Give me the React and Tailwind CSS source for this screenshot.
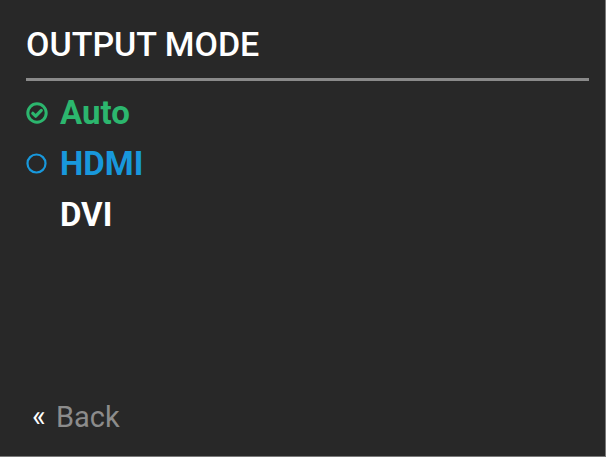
export default function App() {
  const items = [
    { label: "Auto", color: "text-[#2cb66e]", icon: "check" },
    { label: "HDMI", color: "text-[#1898dc]", icon: "ring" },
    { label: "DVI", color: "text-white", icon: null },
  ];

  return (
    <div
      className="w-[606px] h-[457px] bg-[#282828] border-r border-b border-[#7a7a7a] flex flex-col pl-[25px] pr-[16px]"
      style={{ fontFamily: "Roboto, 'Liberation Sans', sans-serif" }}
    >
      <div className="pl-[1px] pt-[24px] text-[34px] leading-[40px] font-medium text-white">OUTPUT MODE</div>
      <div className="ml-[1px] mt-[14px] h-[3px] bg-[#8a8a8a]" />

      <ul className="mt-[6px] flex flex-col">
        {items.map((it) => (
          <li key={it.label} className={`flex items-center h-[51px] ${it.color}`}>
            <span className="w-[35px] flex items-center">
              {it.icon === "check" && (
                <svg width="24" height="24" viewBox="0 0 24 24" fill="none" stroke="currentColor">
                  <circle cx="12" cy="12" r="9.2" strokeWidth="3" />
                  <path d="M7.8 12.3l2.9 2.9 5.6-5.8" strokeWidth="3.2" strokeLinecap="round" strokeLinejoin="round" />
                </svg>
              )}
              {it.icon === "ring" && (
                <svg width="23" height="23" viewBox="0 0 24 24" fill="none" stroke="currentColor">
                  <circle cx="12" cy="12" r="9.4" strokeWidth="2.3" />
                </svg>
              )}
            </span>
            <span className="text-[33px] font-bold leading-none">{it.label}</span>
          </li>
        ))}
      </ul>

      <div className="mt-auto mb-[24px] flex items-center text-[29px] leading-none">
        <span className="text-white w-[31px] pl-[7px] -mt-[2px]">«</span>
        <span className="text-[#8c8c8c]">Back</span>
      </div>
    </div>
  );
}
